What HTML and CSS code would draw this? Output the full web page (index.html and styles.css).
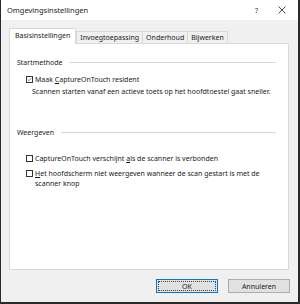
FILE: index.html
```html
<!DOCTYPE html>
<html lang="nl">
<head>
    <meta charset="UTF-8">
    <title>Omgevingsinstellingen</title>
    <link rel="stylesheet" href="styles.css">
</head>
<body>

    <div class="window">
        <!-- Title bar -->
        <div class="titlebar">
            <span class="title">Omgevingsinstellingen</span>
            <span class="help">?</span>
            <svg class="close" width="8" height="8" viewBox="0 0 8 8">
                <path d="M0.5 0.5 L7.5 7.5 M7.5 0.5 L0.5 7.5" stroke="#222" stroke-width="0.8" fill="none"/>
            </svg>
        </div>

        <!-- Tabs -->
        <div class="tabs">
            <div class="tab active">Basisinstellingen</div>
            <div class="tab">Invoegtoepassing</div>
            <div class="tab">Onderhoud</div>
            <div class="tab">Bijwerken</div>
        </div>

        <div class="panel">
            <div class="group-title"><span>Startmethode</span><div class="rule"></div></div>

            <div class="check-row first">
                <span class="box">
                    <svg width="7" height="7" viewBox="0 0 7 7">
                        <path d="M1.2 3.6 L2.8 5.2 L5.9 1.6" stroke="#222" stroke-width="0.8" fill="none"/>
                    </svg>
                </span>
                <span class="label">Maak <u>C</u>aptureOnTouch resident</span>
            </div>
            <div class="note">Scannen starten vanaf een actieve toets op het hoofdtoestel gaat sneller.</div>

            <div class="group-title group-second"><span>Weergeven</span><div class="rule"></div></div>

            <div class="check-row second">
                <span class="box"></span>
                <span class="label">CaptureOnTouch verschijnt <u>a</u>ls de scanner is verbonden</span>
            </div>
            <div class="check-row third">
                <span class="box"></span>
                <span class="label"><u>H</u>et hoofdscherm niet weergeven wanneer de scan gestart is met de<br>scanner knop</span>
            </div>
        </div>

        <div class="buttons">
            <div class="btn default"><span class="focus">OK</span></div>
            <div class="btn">Annuleren</div>
        </div>
    </div>

</body>
</html>
```

FILE: styles.css
```css
/* Global */
body, html {
    margin: 0;
    padding: 0;
    background: #f0f0f0;
    font-family: 'Noto Sans', 'Open Sans', sans-serif;
    color: #1a1a1a;
}

.window {
    width: 300px;
    height: 304px;
    box-sizing: border-box;
    border-left: 1px solid #2a2a2a;
    border-right: 2px solid #2a2a2a;
    border-bottom: 2px solid #2a2a2a;
    background: #f0f0f0;
    display: flex;
    flex-direction: column;
}

/* Title bar */
.titlebar {
    height: 20px;
    background: #fff;
    display: flex;
    align-items: center;
    padding-left: 6px;
    font-size: 7.5px;
}

.title {
    flex: 1;
}

.help {
    font-size: 7px;
    margin-right: 20px;
    color: #333;
}

.close {
    margin-right: 12px;
}

/* Tabs */
.tabs {
    display: flex;
    align-items: flex-end;
    margin: 8px 0 0 8px;
    height: 15px;
    font-size: 7px;
}

.tab {
    height: 11px;
    line-height: 11px;
    padding: 0 3px;
    border: 1px solid #d9d9d9;
    border-bottom: none;
    background: #f0f0f0;
    margin-right: -1px;
    white-space: nowrap;
}

.tab.active {
    height: 15px;
    line-height: 14px;
    background: #fff;
    position: relative;
    z-index: 1;
    margin-bottom: -1px;
    padding: 0 5px;
    margin-right: 0;
}

/* Panel */
.panel {
    margin: 0 9px 0 8px;
    height: 227px;
    box-sizing: border-box;
    background: #fff;
    border: 1px solid #d9d9d9;
    padding: 14px 12px 0 7px;
    font-size: 7px;
    line-height: 9px;
}

.group-title {
    display: flex;
    align-items: center;
}

.rule {
    flex: 1;
    height: 1px;
    background: #d5d5d5;
    margin-left: 7px;
}

.group-second {
    margin-top: 32px;
}

.check-row {
    display: flex;
    align-items: flex-start;
    margin-left: 9px;
}

.check-row.first {
    margin-top: 8px;
}

.check-row.second {
    margin-top: 17px;
}

.check-row.third {
    margin-top: 6px;
    line-height: 9.6px;
}

.box {
    width: 7px;
    height: 7px;
    border: 1px solid #333;
    box-sizing: border-box;
    margin-top: 1px;
    margin-right: 2px;
    flex-shrink: 0;
    display: flex;
    align-items: center;
    justify-content: center;
    background: #fff;
}

.box svg {
    display: block;
}

.note {
    margin: 3px 0 0 15px;
}

/* Buttons */
.buttons {
    display: flex;
    justify-content: flex-end;
    gap: 10px;
    margin: 9px 8px 0 0;
}

.btn {
    width: 62px;
    height: 14px;
    box-sizing: border-box;
    border: 1px solid #adadad;
    background: #e1e1e1;
    font-size: 7px;
    display: flex;
    align-items: center;
    justify-content: center;
}

.btn.default {
    border-color: #0078d7;
    padding: 1px;
}

.focus {
    flex: 1;
    align-self: stretch;
    display: flex;
    align-items: center;
    justify-content: center;
    border: 1px dotted #444;
}
```
